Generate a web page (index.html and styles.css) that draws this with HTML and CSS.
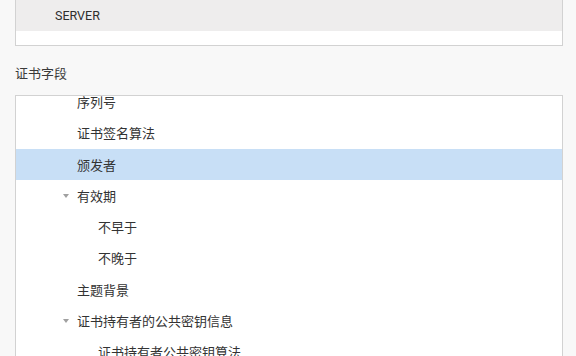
FILE: index.html
```html
<!DOCTYPE html>
<html lang="zh">
<head>
<meta charset="utf-8">
<title>证书字段</title>
<link rel="stylesheet" href="styles.css">
</head>
<body>
<div class="page">
  <div class="list-box top-box">
    <div class="item inactive-selected"><span class="latin">SERVER</span></div>
    <div class="item-spacer"></div>
  </div>

  <div class="section-label">证书字段</div>

  <div class="list-box tree-box">
    <ul class="tree">
      <li class="node lvl1">序列号</li>
      <li class="node lvl1">证书签名算法</li>
      <li class="node lvl1 selected">颁发者</li>
      <li class="node lvl1 expandable"><span class="twisty"></span>有效期</li>
      <li class="node lvl2">不早于</li>
      <li class="node lvl2">不晚于</li>
      <li class="node lvl1">主题背景</li>
      <li class="node lvl1 expandable"><span class="twisty"></span>证书持有者的公共密钥信息</li>
      <li class="node lvl2">证书持有者公共密钥算法</li>
      <li class="node lvl2">证书持有者的公共密钥</li>
    </ul>
  </div>
</div>
</body>
</html>
```

FILE: styles.css
```css
html, body {
  margin: 0;
  padding: 0;
  height: 100%;
  overflow: hidden;
}

body {
  background: #f8f8f8;
  color: #333333;
  font-family: "Noto Sans CJK SC", "Noto Sans", Roboto, sans-serif;
  font-size: 13px;
}

.page {
  display: flex;
  flex-direction: column;
  height: 100%;
  padding: 0 13px 0 15px;
}

.list-box {
  background: #ffffff;
  border: 1px solid #d2d2d2;
}

.top-box {
  margin-top: -1px;
}

.item {
  height: 31px;
  display: flex;
  align-items: center;
  padding-left: 39px;
}

.inactive-selected {
  background: #eeeded;
}

.latin {
  font-family: Roboto, "Liberation Sans", sans-serif;
  font-size: 12.5px;
  color: #2e2e2e;
}

.item-spacer {
  height: 14px;
}

.section-label {
  height: 20px;
  line-height: 20px;
  margin: 17px 0 12px 0;
  color: #3a3a3a;
}

.tree-box {
  flex: 1;
  overflow: hidden;
  border-bottom: none;
}

.tree {
  list-style: none;
  margin: -10px 0 0 0;
  padding: 0;
}

.node {
  height: 31.25px;
  display: flex;
  align-items: center;
  position: relative;
  color: #333333;
}

.lvl1 {
  padding-left: 61px;
}

.lvl2 {
  padding-left: 82px;
}

.selected {
  background: #c8dff6;
}

.twisty {
  position: absolute;
  left: 47px;
  top: 50%;
  margin-top: -1px;
  width: 0;
  height: 0;
  border-left: 3.5px solid transparent;
  border-right: 3.5px solid transparent;
  border-top: 4px solid #a0a0a0;
}
```
